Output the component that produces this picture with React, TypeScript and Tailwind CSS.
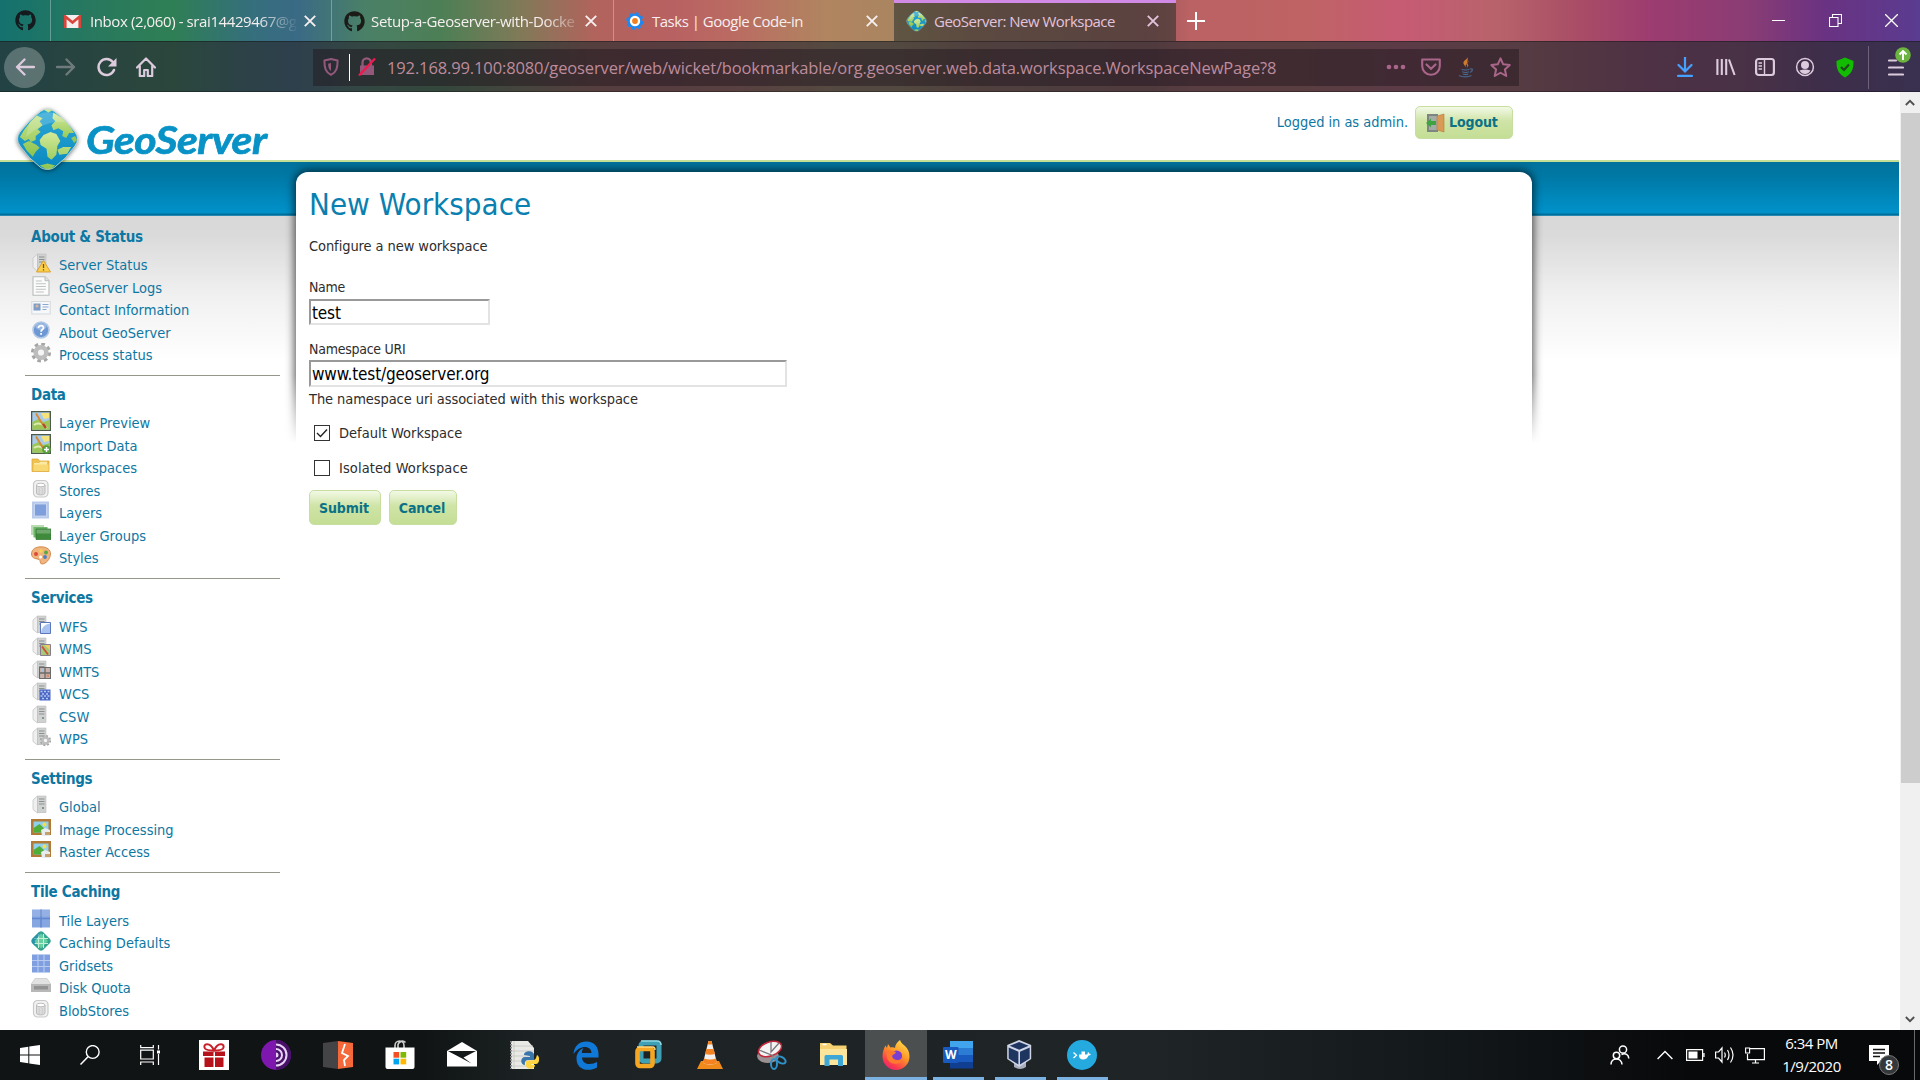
import type { ReactNode } from "react";
import { FaGithub } from "react-icons/fa";

type P = { children: ReactNode; className?: string; vb?: string };
const Svg = ({ children, className = "w-5 h-5", vb = "0 0 20 20" }: P) => (
  <svg viewBox={vb} className={"shrink-0 " + className} fill="none">
    {children}
  </svg>
);

/* ---------- browser chrome ---------- */

const Close = ({ className = "" }: { className?: string }) => (
  <Svg vb="0 0 12 12" className={"w-3 h-3 " + className}>
    <path d="M.8.8l10.4 10.4M11.2.8L.8 11.2" stroke="currentColor" strokeWidth="1.9" />
  </Svg>
);

const Globe = ({ className }: { className: string }) => (
  <Svg vb="0 0 64 64" className={className}>
    <defs>
      <linearGradient id="sea" x1="0" y1="0" x2="0" y2="1">
        <stop offset="0" stopColor="#2fa9d6" />
        <stop offset="1" stopColor="#0787c0" />
      </linearGradient>
      <linearGradient id="land" x1="0" y1="0" x2="0" y2="1">
        <stop offset="0" stopColor="#d3ea9a" />
        <stop offset="1" stopColor="#8cc34d" />
      </linearGradient>
      <clipPath id="dia">
        <path d="M25 4q7-5 14 0 12 9 21 21 5 7 0 14-9 13-21 22-7 4-14 0Q13 52 4 39q-5-7 0-14Q13 13 25 4z" />
      </clipPath>
    </defs>
    <g clipPath="url(#dia)">
      <path d="M0 0h64v64H0z" fill="url(#sea)" />
      <path
        d="M21 8l-6 6-7 9-4 7 5 4 4-2 2 3 5-2 0-4 5-4-3-3 5-4-3-4 3-3zM7 37l6-3 8 4 3 3-4 4-3 5-6-6zM26 1l9-2 3 3-5 3z"
        fill="url(#land)"
      />
      <path
        d="M38 5l-1 6 3 3-4 4 2 5 5-2 5 3-1 5 4 2 3-5 5 0-3-5-7-9zM56 31l4-2 2 4-3 3z"
        fill="url(#land)"
      />
      <path d="M28 28l7-3 6 2 4 7-3 5-1 9-5 5-4-3-1-8-6-4-1-5zM42 43l6-3 8 0-4 7-8 1zM24 59l8-2 8 2-7 5z" fill="url(#land)" />
      <path d="M14 15Q32-6 50 15 30 12 10 30z" fill="#fff" opacity=".18" />
    </g>
    <path
      d="M25 4q7-5 14 0 12 9 21 21 5 7 0 14-9 13-21 22-7 4-14 0Q13 52 4 39q-5-7 0-14Q13 13 25 4z"
      stroke="#cfe6d8"
      strokeOpacity=".8"
    />
  </Svg>
);

const tabText = "font-['Open_Sans'] text-[15px] leading-5 whitespace-nowrap";

const TabBar = () => (
  <div className="flex h-[41px] items-stretch text-[#f6efef]">
    <div className="flex w-[51px] items-center justify-center border-r border-white/30">
      <FaGithub className="h-[21px] w-[21px] text-[#141a1e]" />
    </div>
    <div className="flex w-[281px] items-center border-r border-white/30 pl-[13px] pt-px">
      <Svg vb="0 0 17 13" className="h-[13px] w-[17px]">
        <path d="M0 0h17v13H0z" fill="#f3efee" />
        <path d="M1.3 13V1.5l7.2 6 7.2-6V13" stroke="#d9453a" strokeWidth="2.6" />
      </Svg>
      <span className={tabText + " ml-[9px] w-[209px] tracking-[-0.4px] [mask-image:linear-gradient(90deg,#000_80%,transparent)]"}>
        Inbox (2,060) - srai14429467@g
      </span>
      <Close className="ml-[5px]" />
    </div>
    <div className="flex w-[282px] items-center border-r border-white/30 pl-[12px] pt-px">
      <FaGithub className="h-[21px] w-[21px] shrink-0 text-[#1b1c17]" />
      <span className={tabText + " ml-[6px] w-[206px] tracking-[-0.35px] [mask-image:linear-gradient(90deg,#000_84%,#0003)]"}>
        Setup-a-Geoserver-with-Docke
      </span>
      <Close className="ml-[8px]" />
    </div>
    <div className="flex w-[280px] items-center pl-[12px] pt-px">
      <Svg vb="0 0 18 18" className="h-[18px] w-[18px]">
        <circle cx="9" cy="9" r="7.3" fill="#1e88f0" stroke="#1e88f0" strokeWidth="3" strokeDasharray="3.2 2.53" />
        <circle cx="9" cy="9" r="5.2" fill="#fff" />
        <circle cx="9" cy="9" r="2.9" fill="#f0811f" />
      </Svg>
      <span className={tabText + " ml-[8px] w-[207px] tracking-[-0.5px]"}>Tasks | Google Code-in</span>
      <Close className="ml-[7px]" />
    </div>
    <div className="flex w-[282px] items-center border-t-[3px] border-[#d18be6] bg-[#2e332e]/60 pb-[2px] pl-[12px] text-[#e3c3dc]">
      <Globe className="h-[24px] w-[21px]" />
      <span className={tabText + " ml-[7px] w-[206px] tracking-[-0.52px]"}>GeoServer: New Workspace</span>
      <Close className="ml-[7px]" />
    </div>
    <div className="flex flex-1 items-center pl-[11px] text-white">
      <Svg vb="0 0 18 18" className="h-[18px] w-[18px]">
        <path d="M9 0v18M0 9h18" stroke="currentColor" strokeWidth="2" />
      </Svg>
      <div className="ml-auto flex items-center pr-[22px]">
        <Svg vb="0 0 13 13" className="h-[13px] w-[13px]">
          <path d="M0 6.5h13" stroke="#fff" />
        </Svg>
        <Svg vb="0 0 13 13" className="ml-[44px] h-[13px] w-[13px]">
          <path d="M.5 3.5h8.5v9H.5zM3.500 3V.5h9v9H9" stroke="#fff" strokeWidth="1.1" />
        </Svg>
        <Svg vb="0 0 13 13" className="ml-[43px] h-[13px] w-[13px]">
          <path d="M0 0l13 13M13 0L0 13" stroke="#fff" strokeWidth="1.3" />
        </Svg>
      </div>
    </div>
  </div>
);

const Toolbar = () => (
  <div className="flex h-[51px] items-center border-y border-black/30 bg-[#2a2c30]/68 pl-[4px] pt-px text-[#dccbdc]">
    <div className="flex h-[41px] w-[41px] items-center justify-center rounded-full bg-white/25">
      <Svg>
        <path d="M19 10H2M9.500 2.500L2 10l7.500 7.500" stroke="currentColor" strokeWidth="2.3" strokeLinecap="round" strokeLinejoin="round" />
      </Svg>
    </div>
    <Svg className="ml-[11px] h-5 w-5 opacity-40">
      <path d="M1 10h17M10.500 2.500L18 10l-7.500 7.500" stroke="currentColor" strokeWidth="2.300" strokeLinecap="round" strokeLinejoin="round" />
    </Svg>
    <Svg className="ml-[21px] h-5 w-5">
      <path d="M15.800 5A8 8 0 1 0 17 13" stroke="currentColor" strokeWidth="2.500" strokeLinecap="round" />
      <path d="M19.500 1v8.500H11z" fill="currentColor" />
    </Svg>
    <Svg className="ml-[19px] h-5 w-5">
      <path d="M1 10.500L10 1.500l9 9M3.800 9v10h4.400v-6h3.600v6h4.400V9" stroke="currentColor" strokeWidth="2.200" strokeLinecap="round" strokeLinejoin="round" />
    </Svg>
    <div className="ml-[157px] flex h-[37px] w-[1206px] items-center bg-[#20131c]/45 pl-[10px] text-[#a9668a]">
      <Svg vb="0 0 16 18" className="h-[18px] w-4">
        <path d="M8 1.100l6.600 1.500c0 7-1 11.400-6.600 14.200C2.400 14 1.400 9.600 1.400 2.600z" stroke="#94587a" strokeWidth="2" strokeLinejoin="round" />
        <path d="M8 5v8c-2.300-1.700-2.800-3.800-2.900-7.300z" fill="#94587a" />
      </Svg>
      <div className="ml-[10px] h-[27px] w-px bg-white" />
      <Svg vb="0 0 18 20" className="ml-[8px] h-5 w-[18px]">
        <path d="M4.500 9V5.500a4.200 4.200 0 0 1 8.400 0V9" stroke="#94587a" strokeWidth="2.300" />
        <path d="M2 8.500h14V18H2z" fill="#94587a" />
        <path d="M1 18.500L17 1.500" stroke="#ee1a4d" strokeWidth="2.400" />
      </Svg>
      <span className="ml-[11px] w-[892px] whitespace-nowrap pt-px font-['Open_Sans'] text-[16.5px] leading-6 tracking-[-0.13px] text-[#bd8b9c]">
        192.168.99.100:8080/geoserver/web/wicket/bookmarkable/org.geoserver.web.data.workspace.WorkspaceNewPage?8
      </span>
      <Svg vb="0 0 20 6" className="ml-auto h-[6px] w-5">
        <circle cx="3" cy="3" r="2.300" fill="currentColor" />
        <circle cx="10" cy="3" r="2.300" fill="currentColor" />
        <circle cx="17" cy="3" r="2.300" fill="currentColor" />
      </Svg>
      <Svg className="ml-[15px] h-5 w-5">
        <path d="M1.200 2.500h17.600V9a8.800 8.800 0 0 1-17.600 0z" stroke="currentColor" strokeWidth="2.100" strokeLinejoin="round" />
        <path d="M5.500 7.500l4.500 4.300 4.500-4.300" stroke="currentColor" strokeWidth="2.200" strokeLinecap="round" />
      </Svg>
      <Svg vb="0 0 16 22" className="ml-[17px] h-[22px] w-4">
        <path d="M9 0c2 3-4.500 4.500-3.500 7.500L8 12c-1-2-.3-3 .5-4S10.500 3 9 0z" fill="#d07a2e" />
        <path d="M11.500 5C8 6.500 8 8 9.200 9.600c.6 1-.2 1.900-.6 2.200 2.600-1.500 1.600-2.900.9-3.700C9 7 10 6 11.500 5z" fill="#d07a2e" />
        <path d="M3.500 13.300c2 .8 6 .7 8 0M4 15.800c2 .8 5.500.7 7 0M4.800 18c2 .7 4 .7 5.500 0M1 19.500c3 1.800 9.500 1.800 12.500 0M12 13c3-1 3.500 2 0 3.500" stroke="#48658a" strokeWidth="1.200" />
      </Svg>
      <Svg className="ml-[16px] mr-[8px] h-[21px] w-[21px]">
        <path d="M10 1.300l2.600 5.700 6.200.7-4.600 4.200 1.300 6.200-5.500-3.100-5.500 3.100 1.300-6.200L1.200 7.700 7.400 7z" stroke="currentColor" strokeWidth="1.900" strokeLinejoin="round" />
      </Svg>
    </div>
    <Svg vb="0 0 16 20" className="ml-[158px] h-5 w-4">
      <path d="M8 0v14M1.500 8L8 14.500 14.500 8M1 18.800h14" stroke="#45a1ff" strokeWidth="2.200" strokeLinecap="round" />
    </Svg>
    <Svg className="ml-[23px] h-5 w-5">
      <path d="M1.400 2v16M5.800 2v16M10.200 2v16M13 2.500L18.600 18" stroke="currentColor" strokeWidth="2.100" />
    </Svg>
    <Svg className="ml-[19px] h-5 w-5">
      <rect x="1.100" y="2" width="17.800" height="16" rx="2.500" stroke="currentColor" strokeWidth="2.200" />
      <path d="M9.500 2v16M3.500 6H7M3.500 9H7M3.500 12H7" stroke="currentColor" strokeWidth="1.400" />
    </Svg>
    <Svg className="ml-[20px] h-5 w-5">
      <circle cx="10" cy="10" r="8.400" stroke="currentColor" strokeWidth="1.500" />
      <circle cx="10" cy="8" r="4" fill="currentColor" />
      <path d="M4.500 13.500q5.500-2 11 0Q13.500 17 10 17t-5.500-3.500z" fill="currentColor" />
    </Svg>
    <Svg vb="0 0 18 20" className="ml-[21px] h-[21px] w-[18px]">
      <path d="M9 0l8.500 3.500c.3 8-2 13-8.500 16.500C2.500 16.500.2 11.500.5 3.500z" fill="#12bc00" />
      <path d="M5 9.500l3 3 5-5.500" stroke="#20451f" strokeWidth="2.200" />
    </Svg>
    <div className="ml-[14px] h-[43px] w-px bg-white/25" />
    <div className="relative ml-[19px] h-5 w-4">
      <Svg vb="0 0 16 20" className="h-5 w-4">
        <path d="M1 3.500h7M1 10.500h14M1 17.500h14" stroke="currentColor" strokeWidth="2.200" strokeLinecap="round" />
      </Svg>
      <Svg vb="0 0 16 16" className="absolute -top-[10px] left-[7px] h-4 w-4">
        <circle cx="8" cy="8" r="7.800" fill="#6cb43f" />
        <path d="M8 13V4M4.500 7.500L8 4l3.500 3.500" stroke="#fff" strokeWidth="1.900" />
      </Svg>
    </div>
  </div>
);

/* ---------- side menu icons ---------- */

const serverBox = (
  <>
    <path d="M2 5l4.500-4H15v15l-1.500 2H7l-5-3.500z" fill="#dcdcdc" />
    <path d="M2 5l4.500-4v17L2 14.500z" fill="#efefef" stroke="#c2c2c2" strokeWidth=".7" />
    <path d="M6.500 1H15v16.500H6.500z" fill="#d0d2d2" stroke="#bcbcbc" strokeWidth=".6" />
    <path d="M8 4h5.500M8 6.500h5.500M8 9h5.500" stroke="#8b9090" strokeWidth="1.200" />
    <path d="M11 12h2v2h-2z" fill="#7f9a84" />
  </>
);

const mapPic = (
  <>
    <path d="M.6.600h18.800v18.800H.6z" fill="#a9cbe8" stroke="#4c5a48" strokeWidth="1.300" />
    <path d="M1.300 11l6-3 5 3 6.400-2v9.700H1.300z" fill="#9cc659" />
    <path d="M10 2h8v5l-5 1z" fill="#f5e27b" />
    <path d="M3 14q5-4 13 3" stroke="#dcecb0" strokeWidth="2" />
    <path d="M5 2.500l7 11.500" stroke="#d98a31" strokeWidth="1.900" />
    <path d="M12 13l3 4" stroke="#b04a2a" strokeWidth="2.400" />
  </>
);

const framePic = (
  <>
    <path d="M0 1h20v16H0z" fill="#b27a35" />
    <path d="M2.500 3.500h15v11h-15z" fill="#8fd0ee" />
    <path d="M2.500 10l6-4 9 8.500h-15z" fill="#4fae3a" />
    <circle cx="13.500" cy="6.500" r="2" fill="#f3e04a" />
    <path d="M10 12l4-2 5 2v6h-8z" fill="#e9ecec" />
    <path d="M14 14h5v3h-5z" fill="#c4a070" />
  </>
);

const cylinder = (
  <>
    <rect x="2.500" y="1.500" width="14.500" height="16.500" rx="4" fill="#f2f2f2" stroke="#c9c9c9" strokeWidth="1.200" />
    <path d="M5.500 6v8c0 2.500 8.500 2.500 8.500 0V6" fill="#dcdcdc" stroke="#b5b5b5" strokeWidth=".9" />
    <ellipse cx="9.750" cy="6" rx="4.250" ry="1.800" fill="#fff" stroke="#b5b5b5" strokeWidth=".9" />
    <path d="M8.200 9v6M11.300 9v6" stroke="#cccccc" />
  </>
);

const gear = (cx: number, cy: number, r: number) => (
  <>
    <circle cx={cx} cy={cy} r={r} stroke="#a5a5a5" strokeWidth={r * 0.45} strokeDasharray={`${r * 0.42} ${r * 0.3654}`} />
    <circle cx={cx} cy={cy} r={r * 0.65} stroke="#bdbdbd" strokeWidth={r * 0.55} fill="#f5f5f5" />
  </>
);

const icons: Record<string, ReactNode> = {
  status: (
    <>
      {serverBox}
      <path d="M12.500 7.500l7 11.500h-14z" fill="#fbd14b" stroke="#d99a28" strokeWidth=".9" strokeLinejoin="round" />
      <path d="M12.500 11v4M12.500 16.300v1.300" stroke="#7a4f12" strokeWidth="1.300" />
    </>
  ),
  logs: (
    <>
      <path d="M2 .700h12l4 4v14.600H2z" fill="#fbfbfb" stroke="#b9bdbd" strokeWidth="1.100" />
      <path d="M14 .700v4h4" fill="#e3e3e3" stroke="#b9bdbd" />
      <path d="M4.800 5h6M4.800 7.800h10M4.800 10.500h10M4.800 13.200h10M4.800 16h8" stroke="#bfc3c3" strokeWidth="1.100" />
    </>
  ),
  contact: (
    <>
      <rect x=".8" y="3.500" width="18.400" height="12.500" fill="#f6f8fa" stroke="#d5d9dc" />
      <path d="M2.500 5.500h7v7h-7z" fill="#7d9cc8" />
      <circle cx="6" cy="8" r="1.600" fill="#d9b59a" />
      <path d="M11.500 6.500h6M11.500 9h6M11.500 11.500h4" stroke="#8ba8cf" strokeWidth="1.200" />
    </>
  ),
  about: (
    <>
      <circle cx="10" cy="9" r="8" fill="#6d98d3" stroke="#b4c8e6" strokeWidth="1.600" />
      <ellipse cx="10" cy="5.500" rx="5.500" ry="3.500" fill="#fff" opacity=".3" />
      <path d="M7.500 7c0-3.500 5.500-3 5 0-.2 1.600-2.400 1.600-2.400 3.700M10.100 12v1.800" stroke="#fff" strokeWidth="1.800" />
    </>
  ),
  gear: gear(10, 9.5, 8.2),
  preview: mapPic,
  import: (
    <>
      {mapPic}
      <circle cx="15.500" cy="15.500" r="4.300" fill="#58a03c" />
      <path d="M15.500 13v5M13 15.500h5" stroke="#fff" strokeWidth="1.500" />
    </>
  ),
  folder: (
    <>
      <path d="M1 3h6l1.500 2H18v10.500H1z" fill="#efc14f" stroke="#dfa93b" strokeWidth=".8" />
      <path d="M3 7h5l1.500-1.200H16v7.700H3z" fill="#fbe9a4" />
      <path d="M2.500 8.500h15V15h-15z" fill="#f8d873" />
    </>
  ),
  store: cylinder,
  layer: (
    <>
      <path d="M1 .500h17v17H1z" fill="#b7caec" />
      <path d="M3.500 3h12v12h-12z" fill="#7f9fdc" stroke="#e2eaf8" strokeWidth=".6" />
    </>
  ),
  groups: (
    <>
      <path d="M0 1h13v10H0z" fill="#b9dcb5" />
      <path d="M2.500 3h14v10.500h-14z" fill="#6fb56a" />
      <path d="M5 5h15v10.500H5z" fill="#3f8b3b" stroke="#2d7430" strokeWidth=".7" />
      <path d="M5.500 5.500h14v4h-14z" fill="#fff" opacity=".25" />
    </>
  ),
  styles: (
    <>
      <path d="M10 .800c6 0 9.700 3 9.500 7.200-.2 5-4.500 10-8.500 10-2.500 0-1-3.500-3-4.500S.5 13 .5 8 5 .800 10 .800z" fill="#f0b47e" stroke="#cf8546" strokeWidth=".9" />
      <circle cx="5" cy="8" r="2" fill="#db4a3c" />
      <circle cx="10" cy="5" r="1.700" fill="#f6d64b" />
      <circle cx="15" cy="6.500" r="1.900" fill="#58a846" />
      <circle cx="14" cy="11" r="1.900" fill="#4a7fc9" />
      <circle cx="9.500" cy="11" r="1.500" fill="#fff" />
    </>
  ),
  wfs: (
    <>
      {serverBox}
      <path d="M9.500 7.500h10v11h-10z" fill="#a9c2ef" stroke="#5a77bd" />
      <path d="M10 17.500q1-8 9-9V8H10z" fill="#fff" />
    </>
  ),
  wms: (
    <>
      {serverBox}
      <path d="M9.500 7.500h10v11h-10z" fill="#a7c97a" stroke="#877e8f" />
      <path d="M13 8h6v5z" fill="#f0cf62" />
      <path d="M11 9.500l6 8" stroke="#cd5238" strokeWidth="1.800" />
    </>
  ),
  wmts: (
    <>
      {serverBox}
      <path d="M8.500 7.500h11v11h-11z" fill="#c9b3ac" stroke="#6b6b6b" strokeWidth="1.100" />
      <path d="M14 7.500v11M8.500 13h11" stroke="#6b6b6b" strokeWidth="1.300" />
      <path d="M10 9h2.500v2.500H10z" fill="#9fc3e0" />
      <path d="M15.500 14.500H18V17h-2.500z" fill="#d58c6c" />
    </>
  ),
  wcs: (
    <>
      {serverBox}
      <path d="M8.500 7.500h11v11h-11z" fill="#4b67c4" />
      <path d="M9.500 9.500h2M13 9.500h2M16.500 9.500h2M11 12h2M15 12h2M9.500 14h2M13 14h2M16.500 14h2M11 16.500h2M15 16.500h2" stroke="#b8c6f2" strokeWidth="1.700" />
    </>
  ),
  server: serverBox,
  wps: (
    <>
      {serverBox}
      {gear(14.5, 13.5, 4.6)}
    </>
  ),
  image: framePic,
  tiles: (
    <>
      <path d="M1 .500h18v18H1z" fill="#86a6e2" />
      <path d="M10 .500v18M1 9.500h18" stroke="#6387cf" strokeWidth="1.500" />
      <path d="M1 .500h18v7H1z" fill="#fff" opacity=".12" />
    </>
  ),
  caching: (
    <>
      <path d="M8 1q2-1.500 4 0l7 7q1.500 2 0 4l-7 7q-2 1.500-4 0l-7-7q-1.500-2 0-4z" fill="#35a48f" />
      <path d="M10 2.500l7 7.500-7 7.500L3 10z" fill="#63cfa2" />
      <path d="M3 7.500h14M3 12.500h14M7.500 3v14M12.500 3v14" stroke="#c4f0d8" strokeWidth="1.100" />
      <path d="M1 8l7-7v4L4 10v5l-3-3z" fill="#1d88b6" opacity=".6" />
    </>
  ),
  grid: (
    <>
      <path d="M1 .500h18v18H1z" fill="#7f9fe0" />
      <path d="M7 .500v18M13 .500v18M1 6.500h18M1 12.500h18" stroke="#b9caf1" strokeWidth="1.100" />
    </>
  ),
  disk: (
    <>
      <path d="M4 2.500h12l4 6H0z" fill="#e2e2e2" stroke="#c6c6c6" strokeWidth=".7" />
      <path d="M0 8h20v8H0z" fill="#b8b8b8" />
      <path d="M3 10h14v3.500H3z" fill="#939393" />
    </>
  ),
};

const menu: { title: string; items: [string, string][] }[] = [
  {
    title: "About & Status",
    items: [
      ["status", "Server Status"],
      ["logs", "GeoServer Logs"],
      ["contact", "Contact Information"],
      ["about", "About GeoServer"],
      ["gear", "Process status"],
    ],
  },
  {
    title: "Data",
    items: [
      ["preview", "Layer Preview"],
      ["import", "Import Data"],
      ["folder", "Workspaces"],
      ["store", "Stores"],
      ["layer", "Layers"],
      ["groups", "Layer Groups"],
      ["styles", "Styles"],
    ],
  },
  {
    title: "Services",
    items: [
      ["wfs", "WFS"],
      ["wms", "WMS"],
      ["wmts", "WMTS"],
      ["wcs", "WCS"],
      ["server", "CSW"],
      ["wps", "WPS"],
    ],
  },
  {
    title: "Settings",
    items: [
      ["server", "Global"],
      ["image", "Image Processing"],
      ["image", "Raster Access"],
    ],
  },
  {
    title: "Tile Caching",
    items: [
      ["tiles", "Tile Layers"],
      ["caching", "Caching Defaults"],
      ["grid", "Gridsets"],
      ["disk", "Disk Quota"],
      ["store", "BlobStores"],
    ],
  },
];

const Sidebar = () => (
  <nav className="w-[296px] shrink-0 pl-[25px] pt-[57.6px] text-[#0d77a3]">
    {menu.map((s, i) => (
      <section
        key={s.title}
        className={"w-[255px] pl-[6px] " + (i < menu.length - 1 ? "border-b border-[#96968a] pb-[9px]" : "")}
      >
        <h3 className="h-[35.7px] pt-[9.3px] text-[15px] font-bold leading-[20px] tracking-[-0.3px]">{s.title}</h3>
        {s.items.map(([ic, label]) => (
          <div key={label} className="flex h-[22.5px] items-start">
            <Svg>{icons[ic]}</Svg>
            <a className="ml-[8px] mt-[2px] whitespace-nowrap text-[14.5px] leading-[20px]">{label}</a>
          </div>
        ))}
      </section>
    ))}
  </nav>
);

const btn =
  "flex items-center rounded-[5px] border border-[#c6dea0] bg-linear-to-b from-[#f3f9e6] via-[#cfe4a6] via-45% to-[#c4de95] text-[14px] font-bold text-[#0b7187]";

const field =
  "flex items-center border-2 border-b-[#e3e3e3] border-l-[#999] border-r-[#e3e3e3] border-t-[#999] bg-white pl-px text-[17px] tracking-[-0.15px] text-black";

const Page = () => (
  <div className="flex w-[1899px] flex-col overflow-hidden bg-white font-['DejaVu_Sans_Condensed','DejaVu_Sans',sans-serif] font-stretch-condensed">
    <header className="relative z-10 flex h-[68px] shrink-0">
      <Globe className="ml-[16px] mt-[15px] h-[64px] w-[63px] drop-shadow-[0_1px_2px_rgba(0,0,0,0.5)]" />
      <span className="ml-[7px] mt-[22px] w-[190px] origin-left scale-x-[1.11] font-[Lato] text-[38.5px] font-bold italic leading-[50px] tracking-[-0.5px] text-[#0892c6] [-webkit-text-stroke:0.7px_#0892c6]">
        GeoServer
      </span>
      <div className="ml-auto mr-[386px] mt-[14px] flex h-[33px] items-center">
        <span className="mr-[7px] text-[14.5px] tracking-[-0.04px] text-[#0d77a3]">Logged in as admin.</span>
        <button className={btn + " h-[33px] w-[98px] pl-[9px]"}>
          <Svg>
            <path d="M2 1h11v18H2z" fill="#7c8580" />
            <path d="M4 3h9v14H4z" fill="#a3aca6" />
            <path d="M12 3l7-2v18l-7-2z" fill="#d99a55" stroke="#b9793a" strokeWidth=".6" />
            <path d="M1 10l5-4.500v2.500h5v4H6v2.500z" fill="#3fa243" />
          </Svg>
          <span className="ml-[4px] tracking-[-0.1px]">Logout</span>
        </button>
      </div>
    </header>
    <div className="flex min-h-0 flex-1 bg-[linear-gradient(180deg,#c5de95_0,#c5de95_2px,#00719c_2px,#0077a3_14px,#0091c9_52px,#0091c9_53px,#00709b_54px,#006c96_55px,#4aa8cf_56px,#d8d8d8_56px,#dadada_75px,#f0f0f0_135px,#fff_200px)]">
      <Sidebar />
      <div className="relative mt-[12px] w-[1236px]">
        <div className="absolute -left-4 -right-4 -top-[10px] h-[284px] overflow-hidden px-4 pt-[10px] [mask-image:linear-gradient(180deg,#000_75%,transparent_99%)]">
          <div className="h-[400px] rounded-t-[12px] shadow-[0_0_9px_2px_rgba(0,0,0,0.62)]" />
        </div>
        <main className="relative flex h-full flex-col items-start rounded-t-[12px] bg-white pl-[13px] text-[14.5px] leading-[20px] tracking-[-0.08px] text-[#2d2d2d]">
          <h1 className="mt-[12px] text-[31px] leading-[40px] tracking-[0.02px] text-[#0a80b0]">New Workspace</h1>
          <p className="mt-[12px]">Configure a new workspace</p>
          <label className="mt-[21px] text-[14px] tracking-[-0.3px]">Name</label>
          <div className={field + " mt-[2px] h-[26px] w-[181px] pt-px"}>test</div>
          <label className="mt-[14px] text-[14px] tracking-[-0.25px]">Namespace URI</label>
          <div className={field + " mt-px h-[27px] w-[478px]"}>www.test/geoserver.org</div>
          <p className="mt-[2px]">The namespace uri associated with this workspace</p>
          <div className="mt-[14px] flex items-center pl-[5px]">
            <span className="flex h-4 w-4 items-center justify-center border-[1.5px] border-[#333] bg-white">
              <Svg vb="0 0 12 12" className="h-3 w-3">
                <path d="M1 6l3.500 3.500L11 2.500" stroke="#222" strokeWidth="1.400" />
              </Svg>
            </span>
            <span className="ml-[9px] tracking-[0.02px]">Default Workspace</span>
          </div>
          <div className="mt-[15px] flex items-center pl-[5px]">
            <span className="-mt-px h-4 w-4 border-[1.5px] border-[#333] bg-white" />
            <span className="ml-[9px] tracking-[0.1px]">Isolated Workspace</span>
          </div>
          <div className="mt-[12px] flex gap-[8px]">
            <button className={btn + " h-[35px] w-[72px] justify-center pr-[2px]"}>Submit</button>
            <button className={btn + " h-[35px] w-[68px] justify-center pr-[2px]"}>Cancel</button>
          </div>
        </main>
      </div>
    </div>
  </div>
);

const Scrollbar = () => (
  <div className="flex w-[21px] flex-col items-center border-l border-white bg-[#f0f0f0] text-[#505050]">
    <Svg vb="0 0 12 8" className="mt-[7px] h-[7px] w-[10px]">
      <path d="M1 7l5-5 5 5" stroke="currentColor" strokeWidth="2.200" />
    </Svg>
    <div className="mt-[7px] h-[670px] w-[19px] bg-[#cdcdcd]" />
    <Svg vb="0 0 12 8" className="mb-[7px] mt-auto h-[7px] w-[10px]">
      <path d="M1 1l5 5 5-5" stroke="currentColor" strokeWidth="2.200" />
    </Svg>
  </div>
);

/* ---------- taskbar ---------- */

const apps: { name: string; active?: boolean; open?: boolean; icon: ReactNode }[] = [
  {
    name: "gift",
    icon: (
      <>
        <path d="M0 0h30v30H0z" fill="#fff" />
        <path d="M4 11.500h10.500V16H4zM16 11.500h10V16H16zM5.500 17.500h9V27h-9zM16 17.500h8.500V27H16z" fill="#b5121b" />
        <path d="M15 10.500C11 1 3 4 6 8.500c1.500 2 6 2 9 2 3 0 7.500 0 9-2C27 4 19 1 15 10.500z" stroke="#c8202a" strokeWidth="2" />
      </>
    ),
  },
  {
    name: "tor",
    icon: (
      <>
        <circle cx="15" cy="15" r="15" fill="#7d17ad" />
        <path d="M15 0a15 15 0 0 1 0 30z" fill="#471069" />
        <path d="M15 4.500a10.500 10.500 0 0 1 0 21M15 9a6 6 0 0 1 0 12" stroke="#e9d3f4" strokeWidth="2" />
        <path d="M15 12.500a2.500 2.500 0 0 1 0 5z" fill="#e9d3f4" />
      </>
    ),
  },
  {
    name: "burp",
    icon: (
      <>
        <path d="M0 3l15-2v28L0 27z" fill="#444346" />
        <path d="M15 1l15 2v24l-15 2z" fill="#f5683a" />
        <path d="M22 4l-3 9 6 3-4 4 1 6" stroke="#fff" strokeWidth="1.800" />
      </>
    ),
  },
  {
    name: "store",
    icon: (
      <>
        <path d="M10 8V5.500a4.500 4.500 0 0 1 9 0V8M13 8V4.500a4.500 4.500 0 0 1 7.500-2" stroke="#cfcfcf" strokeWidth="1.600" />
        <path d="M.5 7.500h29V27a2 2 0 0 1-2 2h-25a2 2 0 0 1-2-2z" fill="#fff" />
        <path d="M8.500 12h5.700v5.700H8.500z" fill="#f25022" />
        <path d="M15.500 12h5.700v5.700h-5.700z" fill="#7fba00" />
        <path d="M8.500 18.700h5.700v5.700H8.500z" fill="#00a4ef" />
        <path d="M15.500 18.700h5.700v5.700h-5.700z" fill="#ffb900" />
      </>
    ),
  },
  {
    name: "mail",
    icon: (
      <>
        <path d="M0 11L15 2l15 9v15.500H0z" fill="#fff" />
        <path d="M1 11h28L16.500 17.500l8 6z" fill="#15191a" />
        <path d="M1 11l13 6 3-1z" fill="#15191a" />
      </>
    ),
  },
  {
    name: "python",
    icon: (
      <>
        <path d="M2 1h17l6 7v21H2z" fill="#e9e9e6" />
        <path d="M5 1v28M2 6h22M2 11h23M2 16h23M2 21h23M2 26h23" stroke="#c4c4c0" strokeWidth=".8" />
        <path d="M2 1v28" stroke="#888" strokeDasharray="1.500 1.500" strokeWidth="2" />
        <path d="M15 15c0-5 10-5 10 0v5h-6c-4 0-3 5-3 5-5 0-5-8 0-8h5v-1z" fill="#3a76ab" />
        <path d="M28 15c3 1 3 9-1 9h-5v1h4c0 5-9 5-9 0v-3c0-3 9 0 10-4z" fill="#ffd443" />
      </>
    ),
  },
  {
    name: "edge",
    icon: (
      <path
        d="M2.500 14C3 6 8.500 1.500 15.500 1.500c7.500 0 12 5 12 12.500v3.500H11c.5 8 10 7.500 15 4.500v5.500c-8 4.500-20.500 3-20.500-9 0-5 3-9 7-10.500-1.200 1.500-1.500 3-1.700 5h9.700c0-8-12-8.500-18 1z"
        fill="#1079d8"
      />
    ),
  },
  {
    name: "vmware",
    icon: (
      <>
        <rect x="8" y="3" width="18" height="18" rx="2.500" stroke="#3f9fb5" strokeWidth="5" />
        <path d="M8 1h16q4 0 4 4" stroke="#8fd8e2" strokeWidth="1.600" />
        <rect x="4.500" y="9" width="15" height="17" rx="2.500" stroke="#f5a623" strokeWidth="4.600" />
        <path d="M4 7h16q2 0 2 3" stroke="#ffd67a" strokeWidth="1.400" />
      </>
    ),
  },
  {
    name: "vlc",
    icon: (
      <>
        <path d="M6 21h18l4 8H2z" fill="#f08a1a" />
        <path d="M13.500 1h3L22 23q-7 3.500-14 0z" fill="#f2f0ee" />
        <path d="M13.500 1h3l.9 3.500h-4.800zM11.300 9h7.400l1.300 5q-5 1.600-10 0zM9 18.500q6 2 12 0l1 4.500q-7 3-14 0z" fill="#f58220" />
      </>
    ),
  },
  {
    name: "snip",
    icon: (
      <>
        <ellipse cx="11" cy="16" rx="11" ry="7" fill="#9b8f91" />
        <ellipse cx="13" cy="9" rx="12" ry="7" transform="rotate(-20 13 9)" fill="#f5f3f3" stroke="#c4273b" strokeWidth="1.500" />
        <path d="M14 2v10l8-9M2 10l15 6" stroke="#777" strokeWidth="1.300" />
        <ellipse cx="17" cy="24" rx="3" ry="5" stroke="#2f92c9" strokeWidth="2" />
        <ellipse cx="24" cy="20" rx="5" ry="3" transform="rotate(30 24 20)" stroke="#2f92c9" strokeWidth="2" />
      </>
    ),
  },
  {
    name: "explorer",
    icon: (
      <>
        <path d="M1 3h10l3 2.500h13.500V25H1z" fill="#f6d171" />
        <path d="M1 9h27v16H1z" fill="#fde59b" />
        <path d="M5.500 26v-9.500q0-1.500 1.500-1.500h15.500q1.500 0 1.500 1.500V26h-5v-6.500h-8.500V26z" fill="#3fa7d6" />
        <path d="M3.500 4.500h4" stroke="#fff" strokeWidth="1.500" />
      </>
    ),
  },
  {
    name: "firefox",
    active: true,
    open: true,
    icon: (
      <>
        <defs>
          <linearGradient id="fx" x1=".8" y1="0" x2=".2" y2="1">
            <stop offset="0" stopColor="#ffe14a" />
            <stop offset=".45" stopColor="#ff9328" />
            <stop offset=".8" stopColor="#fb3a4e" />
            <stop offset="1" stopColor="#e2227e" />
          </linearGradient>
        </defs>
        <path d="M19 0c1 3 3 4 5 6 3 3 4.500 6 4.500 10.500A13.500 13.500 0 0 1 15 30 13.500 13.500 0 0 1 1.500 16.500C1.500 12 2.500 9 4.500 5.500L6 8l1-4 2.500 3.500C11.500 7 13 7 14 8c0-3 2-6 5-8z" fill="url(#fx)" />
        <circle cx="15.500" cy="16" r="5.600" fill="#7a3fd0" />
        <path d="M6 12c3-3 6-1 9 0-1 2.500-3 2-4 4 1 5 8 5.500 11 1-1 8-11 9-15 3-1.500-3-1.500-5-1-8z" fill="#ff7a2e" />
      </>
    ),
  },
  {
    name: "word",
    open: true,
    icon: (
      <>
        <path d="M7 1h23v7.500H7z" fill="#41a5ee" />
        <path d="M7 8h23v7.500H7z" fill="#2b7cd3" />
        <path d="M7 15h23v7.500H7z" fill="#185abd" />
        <path d="M7 22h23v6.500H7z" fill="#103f91" />
        <rect x="0" y="7" width="15.500" height="16" rx="1.200" fill="#185abd" />
        <text x="7.700" y="19" fontSize="12" fontWeight="700" textAnchor="middle" fill="#fff" fontFamily="Open Sans">
          W
        </text>
      </>
    ),
  },
  {
    name: "virtualbox",
    open: true,
    icon: (
      <>
        <path d="M9 22h12v5q-6 4-12 0z" fill="#a9adbd" />
        <g transform="translate(-.8 0)">
          <path d="M15 0l12 5v14L15 27 3 19V5z" fill="#cfd5e6" />
          <path d="M15 2l9.500 3.700-9.500 4-9.500-4z" fill="#1e3560" />
          <path d="M4.500 7.500l9.700 4.200v12.800l-9.700-6zM25.500 7.500l-9.700 4.200v12.800l9.700-6z" fill="#1e3560" />
        </g>
      </>
    ),
  },
  {
    name: "docker",
    open: true,
    icon: (
      <>
        <circle cx="15" cy="15" r="15" fill="#25aadf" />
        <path d="M6.500 12.500l3 2.800-3 2.800" stroke="#fff" strokeWidth="1.300" />
        <path d="M12 14.500h8c1-.5.500-1.700 1-2.500 1 .5 1.200 1 1.300 1.700l1.500.2c-.3 1.300-1.300 1.600-2.300 1.600-1.300 3-3 4-5.500 4-2.700 0-4.200-1.700-4-5zM14.500 11.500h3.500v3h-3.500z" fill="#fff" />
      </>
    ),
  },
];

const Taskbar = () => (
  <footer className="flex h-[50px] shrink-0 items-stretch bg-[linear-gradient(90deg,#101415_0,#101415_22%,#1d2324_28%,#1f2526_60%,#13181a_75%,#08090a_88%,#08090a)] text-white">
    <div className="flex w-[60px] items-center justify-center">
      <Svg>
        <path d="M0 3l8.300-1.200v7.700H0zM9.300 1.600L20 0v9.500H9.300zM0 10.500h8.300v7.700L0 17zM9.300 10.500H20V20L9.300 18.400z" fill="#fff" />
      </Svg>
    </div>
    <div className="flex w-[60px] items-center justify-center">
      <Svg>
        <circle cx="12.700" cy="7" r="6.400" stroke="#fff" strokeWidth="1.400" />
        <path d="M8 11.700L.5 19.500" stroke="#fff" strokeWidth="1.500" />
      </Svg>
    </div>
    <div className="mr-[3px] flex w-[60px] items-center justify-center">
      <Svg>
        <path d="M.7 0v2.700h12.600V0M.7 20v-3h12.600v3M.7 5.200h12.600V14H.7zM18.500 0v4.500M18.500 9v11" stroke="#fff" strokeWidth="1.200" />
        <path d="M17 5.500h3v3h-3z" fill="#fff" />
      </Svg>
    </div>
    {apps.map((a) => (
      <div key={a.name} className={"flex w-[62px] flex-col items-center pt-[10px] " + (a.active ? "bg-[#4b4f50]" : "")}>
        <Svg vb="0 0 30 30" className="h-[30px] w-[30px]">
          {a.icon}
        </Svg>
        {a.open && <div className={"mt-auto h-[3px] bg-[#7cb2e2] " + (a.active ? "w-full" : "w-[51px]")} />}
      </div>
    ))}
    <div className="ml-auto flex items-center">
      <Svg vb="0 0 20 20" className="mr-[27px] h-5 w-5">
        <circle cx="13" cy="4.500" r="3.600" stroke="#fff" strokeWidth="1.500" />
        <circle cx="6.500" cy="10.500" r="3.200" stroke="#fff" strokeWidth="1.500" />
        <path d="M1 19.500c0-7.500 10.500-7.500 11 0M11.500 9.500c4-2 7.300.5 7.300 4" stroke="#fff" strokeWidth="1.500" />
      </Svg>
      <Svg vb="0 0 16 10" className="mr-[13px] h-[10px] w-4">
        <path d="M.6 9L8 1.500 15.400 9" stroke="#fff" strokeWidth="1.400" />
      </Svg>
      <Svg vb="0 0 19 12" className="mr-[10px] h-3 w-[19px]">
        <path d="M.6.600h16v10.800H.6zM18 4v4" stroke="#fff" strokeWidth="1.200" />
        <path d="M2.500 2.500h9v7h-9z" fill="#fff" />
      </Svg>
      <Svg vb="0 0 20 18" className="mr-[10px] h-[18px] w-5">
        <path d="M.6 6v6h3l3.400 4V2L3.600 6zM9.500 6.500q1.500 2.500 0 5M12.500 4q3 5 0 10M15.500 1.500q5 7.500 0 15" stroke="#fff" strokeWidth="1.200" />
      </Svg>
      <Svg vb="0 0 20 17" className="mr-[16px] h-[17px] w-5">
        <path d="M5 1.600h14.400v11H2.500V7M10.500 13v3M7 16h7" stroke="#fff" strokeWidth="1.200" />
        <path d="M.6 1h4v5h-4z" stroke="#fff" strokeWidth="1.100" />
      </Svg>
      <div className="w-[61px] text-center font-['Open_Sans'] text-[15px] leading-[23px] tracking-[-0.5px]">
        <div>6:34 PM</div>
        <div>1/9/2020</div>
      </div>
      <div className="relative ml-[27px] mr-[25px] h-5 w-5">
        <Svg>
          <path d="M0 0h20v16h-8l-4 4v-4H0z" fill="#fff" />
          <path d="M4 4.500h12M4 8h12M4 11.500h7" stroke="#111" strokeWidth="1.300" />
        </Svg>
        <span className="absolute left-[10px] top-[10px] flex h-5 w-5 items-center justify-center rounded-full border border-[#777] bg-[#35383a] font-['Open_Sans'] text-[14px] font-semibold leading-none">
          8
        </span>
      </div>
      <div className="mr-[5px] h-full w-px bg-[#6a6a6a]" />
    </div>
  </footer>
);

export default function App() {
  return (
    <div className="flex h-[1080px] w-[1920px] flex-col overflow-hidden bg-white">
      <div className="shrink-0 bg-[linear-gradient(90deg,#14716e_0,#27785f_4.500%,#2f7f55_9%,#356f7c_13%,#3a6a85_15.500%,#4a8067_19%,#4d7f55_23%,#7f7a58_27%,#b2635c_31%,#b86162_35%,#bb6a62_38%,#b08560_43%,#a98560_47%,#a06a5a_51%,#9c605a_56%,#a0585c_60%,#bb6264_62%,#bf6364_68%,#c65b74_73%,#b8636b_78%,#a94e66_82%,#9c3c70_86%,#8a3d74_91%,#6a3282_95%,#5a3c90_100%)]">
        <TabBar />
        <Toolbar />
      </div>
      <div className="flex min-h-0 flex-1">
        <Page />
        <Scrollbar />
      </div>
      <Taskbar />
    </div>
  );
}
